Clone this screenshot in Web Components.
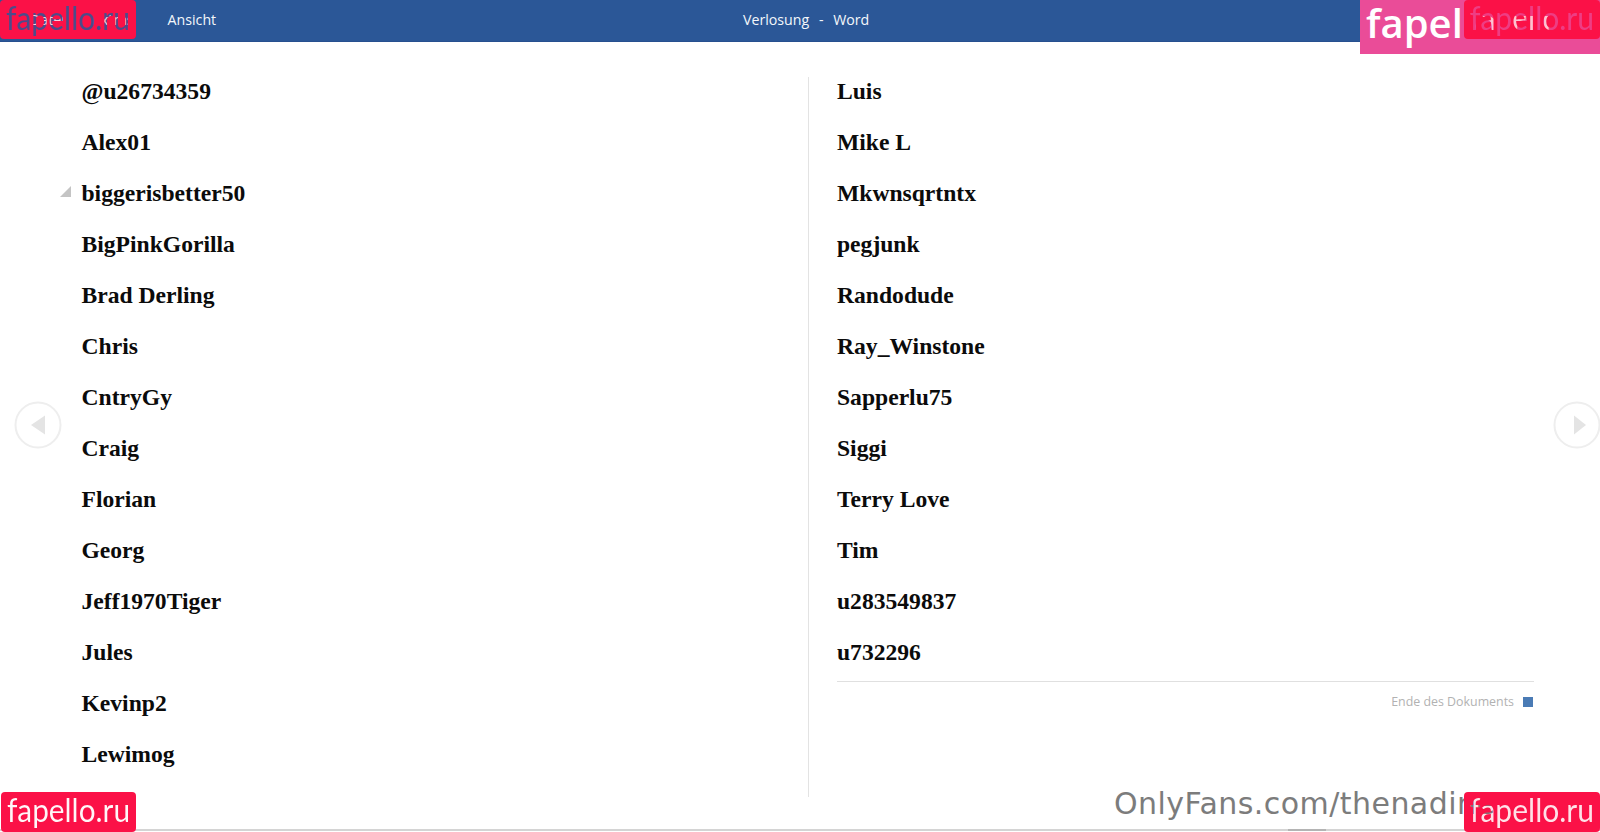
<!DOCTYPE html>
<html lang="de">
<head>
<meta charset="utf-8">
<title>Verlosung - Word</title>
<style>
  html, body { margin: 0; height: 100%; background: #fff; overflow: hidden; }
  body { display: block; width: 1600px; height: 832px; position: relative; font-family: "Open Sans", sans-serif; }
</style>
</head>
<body>
<word-reader>
  <name-column slot="left">
    <name-row>@u26734359</name-row>
    <name-row>Alex01</name-row>
    <name-row marked>biggerisbetter50</name-row>
    <name-row>BigPinkGorilla</name-row>
    <name-row>Brad Derling</name-row>
    <name-row>Chris</name-row>
    <name-row>CntryGy</name-row>
    <name-row>Craig</name-row>
    <name-row>Florian</name-row>
    <name-row>Georg</name-row>
    <name-row>Jeff1970Tiger</name-row>
    <name-row>Jules</name-row>
    <name-row>Kevinp2</name-row>
    <name-row>Lewimog</name-row>
  </name-column>
  <name-column slot="right">
    <name-row>Luis</name-row>
    <name-row>Mike L</name-row>
    <name-row>Mkwnsqrtntx</name-row>
    <name-row>pegjunk</name-row>
    <name-row>Randodude</name-row>
    <name-row>Ray_Winstone</name-row>
    <name-row>Sapperlu75</name-row>
    <name-row>Siggi</name-row>
    <name-row>Terry Love</name-row>
    <name-row>Tim</name-row>
    <name-row>u283549837</name-row>
    <name-row>u732296</name-row>
  </name-column>
</word-reader>

<script>
// Single name line in a column
class NameRow extends HTMLElement {
  constructor() {
    super();
    this.attachShadow({ mode: 'open' });
    this.shadowRoot.innerHTML = `
      <style>
        :host {
          display: block;
          position: relative;
          height: 51px;
          font: bold 23.6px/28px "Liberation Serif", serif;
          color: #0b0b0b;
          white-space: nowrap;
        }
        svg { position: absolute; left: -22px; top: 7px; }
      </style>
      ${this.hasAttribute('marked') ? '<svg width="11" height="11" viewBox="0 0 11 11"><path d="M11 0V11H0Z" fill="#c4c4c4"/></svg>' : ''}
      <slot></slot>
    `;
  }
}

class NameColumn extends HTMLElement {
  constructor() {
    super();
    this.attachShadow({ mode: 'open' });
    this.shadowRoot.innerHTML = `
      <style>:host { display: block; }</style>
      <slot></slot>
    `;
  }
}

// Round page-turn button at the window edge
class PageArrow extends HTMLElement {
  constructor() {
    super();
    this.attachShadow({ mode: 'open' });
    const left = this.getAttribute('dir') === 'prev';
    this.shadowRoot.innerHTML = `
      <style>
        :host { display: block; width: 48px; height: 48px; }
        svg { display: block; }
      </style>
      <svg width="48" height="48" viewBox="0 0 48 48">
        <circle cx="24" cy="24" r="22.5" fill="#fff" stroke="#eeeeee" stroke-width="2"/>
        <path d="${left ? 'M17 24L31 14.5V33.5Z' : 'M33 24L21 14.5V33.5Z'}" fill="#e4e4e4"/>
      </svg>
    `;
  }
}

// fapello.ru stamp: a red plate with the letters cut out of it,
// so whatever lies below shows through the letters
class WaterMark extends HTMLElement {
  constructor() {
    super();
    this.attachShadow({ mode: 'open' });
    const w = +this.getAttribute('w');
    const h = +this.getAttribute('h');
    const cut = this.getAttribute('cut') || '#000';
    const r = this.getAttribute('r') || 4;
    const base = Math.round(h / 2 + 10);
    this.shadowRoot.innerHTML = `
      <style>
        :host { display: block; position: absolute; }
        svg { display: block; }
        text { font: 400 33px "Lato", sans-serif; }
      </style>
      <svg width="${w}" height="${h}" viewBox="0 0 ${w} ${h}">
        <mask id="cutout" maskUnits="userSpaceOnUse" x="0" y="0" width="${w}" height="${h}">
          <rect width="${w}" height="${h}" fill="#fff"/>
          <text x="6" y="${base}" textLength="${w - 12}" lengthAdjust="spacingAndGlyphs" fill="${cut}">fapello.ru</text>
        </mask>
        <rect width="${w}" height="${h}" rx="${r}" fill="#fb1147" mask="url(#cutout)"/>
      </svg>
    `;
  }
}

class WordReader extends HTMLElement {
  constructor() {
    super();
    this.attachShadow({ mode: 'open' });
    this.shadowRoot.innerHTML = `
      <style>
        :host {
          display: flex;
          flex-direction: column;
          width: 1600px;
          height: 832px;
          position: relative;
          overflow: hidden;
          background: #fff;
        }
        .titlebar {
          flex: none;
          height: 40px;
          padding-bottom: 1px;
          border-bottom: 1px solid #27508f;
          background: #2b5797;
          color: #f4f7fb;
          font-size: 14.2px;
          display: grid;
          grid-template-columns: 743px auto 1fr;
          align-items: center;
          line-height: 38px;
        }
        .menu { display: flex; gap: 28px; padding-left: 30px; }
        .menu span:last-child { margin-left: 6px; }
        .title { word-spacing: 6px; }
        .pages {
          flex: none;
          height: 720px;
          margin-top: 35px;
          display: grid;
          grid-template-columns: 809px 1fr;
        }
        .page.left { padding-left: 81.5px; border-right: 1px solid #e3e3e3; }
        .page.right { padding: 0 66px 0 28px; }
        .end-rule { border-top: 1px solid #e0e0e0; margin-top: -8px; }
        .end-note {
          display: flex;
          justify-content: flex-end;
          align-items: center;
          gap: 9px;
          margin-top: 11px;
          padding-right: 1px;
          font-size: 12.4px;
          line-height: 18px;
          color: #b2b2b2;
        }
        .end-note i { width: 10px; height: 10px; background: #4a7bb5; }
        .statusline {
          flex: none;
          margin-top: 32px;
          height: 2px;
          background: #d4d4d4;
          display: flex;
          padding-left: 1288px;
        }
        .statusline i { width: 38px; background: #b4b4b4; }
        page-arrow { position: absolute; top: 401px; }
        .prev { left: 13.5px; }
        .next { left: 1553px; }
        .onlyfans {
          position: absolute;
          left: 1114px;
          top: 784px;
          font: 30px/40px "DejaVu Sans", sans-serif;
          letter-spacing: 0.45px;
          color: #7c7c7c;
          white-space: nowrap;
        }
        .pink {
          position: absolute;
          left: 1360px;
          top: 0;
          width: 240px;
          height: 54px;
          background: #ea4c98;
          color: #fff;
          font: 600 40px/45px "Open Sans", sans-serif;
          padding-left: 6px;
          box-sizing: border-box;
          white-space: nowrap;
        }
        .m1 { left: 0; top: 0; }
        .m2 { left: 1464px; top: 0; }
        .m3 { left: 1px; top: 792px; }
        .m4 { left: 1464px; top: 792px; }
      </style>
      <div class="titlebar">
        <div class="menu"><span>Datei</span><span>Extras</span><span>Ansicht</span></div>
        <div class="title">Verlosung - Word</div>
        <div></div>
      </div>
      <div class="pages">
        <div class="page left"><slot name="left"></slot></div>
        <div class="page right">
          <slot name="right"></slot>
          <div class="end-rule"></div>
          <div class="end-note"><span>Ende des Dokuments</span><i></i></div>
        </div>
      </div>
      <div class="statusline"><i></i></div>
      <page-arrow class="prev" dir="prev"></page-arrow>
      <page-arrow class="next" dir="next"></page-arrow>
      <div class="onlyfans">OnlyFans.com/thenadine</div>
      <div class="pink">fapello.ru</div>
      <water-mark class="m1" w="136" h="39" cut="#2a2a2a"></water-mark>
      <water-mark class="m2" w="136" h="39" cut="#404040"></water-mark>
      <water-mark class="m3" w="135" h="40" cut="#0a0a0a"></water-mark>
      <water-mark class="m4" w="136" h="40" cut="#202020"></water-mark>
    `;
  }
}

customElements.define('name-row', NameRow);
customElements.define('name-column', NameColumn);
customElements.define('page-arrow', PageArrow);
customElements.define('water-mark', WaterMark);
customElements.define('word-reader', WordReader);
</script>
</body>
</html>
